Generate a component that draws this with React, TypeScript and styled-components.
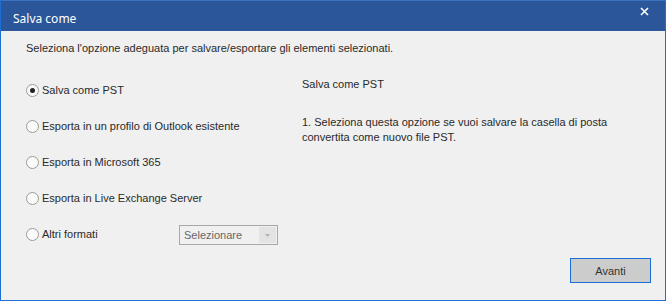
import React, { useState } from 'react';
import styled, { createGlobalStyle } from 'styled-components';

const GlobalStyle = createGlobalStyle`
  html, body {
    margin: 0;
    padding: 0;
    background: #ffffff;
  }
`;

const options = [
  'Salva come PST',
  'Esporta in un profilo di Outlook esistente',
  'Esporta in Microsoft 365',
  'Esporta in Live Exchange Server',
];

export default function App() {
  const [selected, setSelected] = useState(0);

  return (
    <>
      <GlobalStyle />
      <Window>
        <TitleBar>
          <Title>Salva come</Title>
          <CloseButton aria-label="Chiudi">
            <svg width="9" height="9" viewBox="0 0 9 9">
              <path d="M1 1 L8 8 M8 1 L1 8" stroke="#ffffff" strokeWidth="1.6" />
            </svg>
          </CloseButton>
        </TitleBar>
        <Body>
          <Intro>Seleziona l'opzione adeguata per salvare/esportare gli elementi selezionati.</Intro>
          <Content>
            <OptionList>
              {options.map((label, i) => (
                <OptionRow key={label} onClick={() => setSelected(i)}>
                  <Radio $checked={selected === i} />
                  <Label>{label}</Label>
                </OptionRow>
              ))}
              <OptionRow onClick={() => setSelected(4)}>
                <Radio $checked={selected === 4} />
                <Label $width={137}>Altri formati</Label>
                <Select>
                  <SelectText>Selezionare</SelectText>
                  <SelectArrow>
                    <svg width="5" height="3" viewBox="0 0 5 3">
                      <path d="M0 0 L5 0 L2.5 3 Z" fill="#b4b4b4" />
                    </svg>
                  </SelectArrow>
                </Select>
              </OptionRow>
            </OptionList>
            <Description>
              <DescTitle>Salva come PST</DescTitle>
              <DescText>
                1. Seleziona questa opzione se vuoi salvare la casella di posta
                <br />
                convertita come nuovo file PST.
              </DescText>
            </Description>
          </Content>
          <Footer>
            <NextButton>Avanti</NextButton>
          </Footer>
        </Body>
      </Window>
    </>
  );
}

const Window = styled.div`
  width: 666px;
  height: 301px;
  box-sizing: border-box;
  border: 1px solid #1c6fd4;
  border-top-color: #3a72c4;
  display: flex;
  flex-direction: column;
  background: #f0f0f0;
  font-family: 'Liberation Sans', Arial, sans-serif;
  font-size: 11px;
  color: #2a2a2a;
`;

const TitleBar = styled.div`
  height: 30px;
  flex: none;
  background: #2b579a;
  display: flex;
  align-items: center;
  justify-content: space-between;
  padding: 0 12px 0 12px;
  box-sizing: border-box;
`;

const Title = styled.span`
  font-family: 'Noto Sans', 'Open Sans', sans-serif;
  font-size: 12px;
  color: #ffffff;
  margin-top: 4px;
`;

const CloseButton = styled.span`
  display: flex;
  align-items: center;
  margin-top: -10px;
  margin-right: 4px;
`;

const Body = styled.div`
  flex: 1;
  display: flex;
  flex-direction: column;
  padding: 10px 14px 17px 25px;
  box-sizing: border-box;
`;

const Intro = styled.div`
  line-height: 15px;
  height: 15px;
  margin-bottom: 16px;
`;

const Content = styled.div`
  display: grid;
  grid-template-columns: 276px 1fr;
`;

const OptionList = styled.div`
  display: flex;
  flex-direction: column;
`;

const OptionRow = styled.div`
  height: 36px;
  display: flex;
  align-items: center;
  cursor: default;
`;

const Radio = styled.span<{ $checked: boolean }>`
  width: 11px;
  height: 11px;
  border-radius: 50%;
  border: 1px solid #9a9a9a;
  background: #fbfbfb;
  flex: none;
  position: relative;
  margin-right: 3px;
  &::after {
    content: '';
    display: ${(p) => (p.$checked ? 'block' : 'none')};
    position: absolute;
    left: 3px;
    top: 3px;
    width: 5px;
    height: 5px;
    border-radius: 50%;
    background: #222222;
  }
`;

const Label = styled.span<{ $width?: number }>`
  line-height: 15px;
  width: ${(p) => (p.$width ? `${p.$width}px` : 'auto')};
  flex: none;
  white-space: nowrap;
`;

const Select = styled.div`
  width: 99px;
  height: 20px;
  flex: none;
  box-sizing: border-box;
  border: 1px solid #a8a8a8;
  background: #f0f0f0;
  display: flex;
  align-items: stretch;
  padding: 1px;
  margin-top: 2px;
`;

const SelectText = styled.span`
  flex: 1;
  color: #666666;
  display: flex;
  align-items: center;
  padding-left: 3px;
`;

const SelectArrow = styled.span`
  width: 17px;
  background: #e3e3e3;
  display: flex;
  align-items: center;
  justify-content: center;
`;

const Description = styled.div`
  padding-top: 5px;
  display: flex;
  flex-direction: column;
`;

const DescTitle = styled.div`
  line-height: 15px;
  margin-bottom: 23px;
`;

const DescText = styled.div`
  line-height: 15px;
`;

const Footer = styled.div`
  margin-top: auto;
  display: flex;
  justify-content: flex-end;
`;

const NextButton = styled.button`
  width: 81px;
  height: 25px;
  box-sizing: border-box;
  border: 1px solid #1a6fd4;
  background: #cccccc;
  color: #333333;
  font-family: 'Liberation Sans', Arial, sans-serif;
  font-size: 11px;
  padding: 0;
`;
